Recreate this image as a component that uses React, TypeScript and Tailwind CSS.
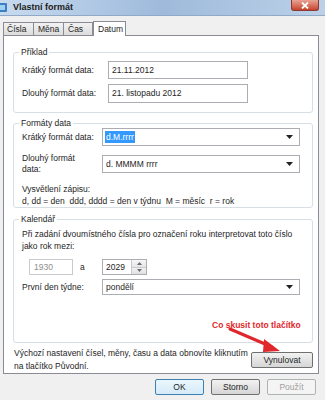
import { ChevronDown } from 'lucide-react';

const font = { fontFamily: '"Liberation Sans", Arial, sans-serif' };

function Combo({ value, selected, h = 'h-[18px]' }: { value: string; selected?: boolean; h?: string }) {
  return (
    <div className={`flex w-[198px] ${h} items-center justify-between border border-[#abadb3] bg-white pl-[2px] pr-[6px]`}>
      {selected ? (
        <span className="bg-[#3399ff] px-[1px] leading-[12px] text-white">{value}</span>
      ) : (
        <span className="px-[1px]">{value}</span>
      )}
      <svg width="7" height="4" viewBox="0 0 7 4">
        <path d="M0 0h7L3.5 4z" fill="#222" />
      </svg>
    </div>
  );
}

function Group({ label, className, children }: { label: string; className?: string; children: React.ReactNode }) {
  return (
    <div className={`rounded-[3px] border border-[#d5dfe5] ${className ?? ''}`}>
      <div className="ml-[5px] -mt-[7px] w-fit bg-white px-[2px] leading-[12px]">{label}</div>
      {children}
    </div>
  );
}

export default function App() {
  return (
    <div className="relative h-[400px] w-[325px] overflow-hidden bg-[#f0f0f0] text-[8.5px] text-[#1e1e1e]" style={font}>
      {/* Title bar */}
      <div className="flex h-[16px] items-start justify-between bg-gradient-to-r from-[#c8dbef] via-[#9ebadb] to-[#bcd1e8] border-b border-[#8fa9c6]">
        <div className="flex items-center gap-[4px] pt-[1px]">
          <svg width="9" height="11" viewBox="0 0 9 11">
            <rect x="-3" y="1" width="10" height="9" rx="1" fill="#3d7fc1" />
            <rect x="-1" y="3" width="6" height="5" fill="#9cd3f5" />
          </svg>
          <span className="text-[9px] font-bold leading-[12px] text-[#1b1b1b]">Vlastní formát</span>
        </div>
        <div className="mr-[6px] flex h-[11px] w-[28px] items-center justify-center rounded-b-[3px] border border-t-0 border-[#8a3a30] bg-gradient-to-b from-[#e8a294] to-[#c6422c]">
          <svg width="8" height="7" viewBox="0 0 8 7">
            <path d="M1 0.5l6 6M7 0.5l-6 6" stroke="white" strokeWidth="1.8" />
          </svg>
        </div>
      </div>

      {/* Tabs */}
      <div className="mt-[5px] flex items-end pl-[3px]">
        <div className="flex h-[13px] w-[31px] items-center border border-b-0 border-[#898c95] bg-gradient-to-b from-[#f2f2f2] to-[#dcdcdc] pl-[3px]">Čísla</div>
        <div className="flex h-[13px] w-[30px] items-center border border-b-0 border-l-0 border-[#898c95] bg-gradient-to-b from-[#f2f2f2] to-[#dcdcdc] pl-[4px]">Měna</div>
        <div className="flex h-[13px] w-[29px] items-center border border-b-0 border-l-0 border-[#898c95] bg-gradient-to-b from-[#f2f2f2] to-[#dcdcdc] pl-[4px]">Čas</div>
        <div className="relative -mb-px flex h-[15px] w-[33px] items-center border border-b-0 border-[#898c95] bg-white pl-[4px] z-10">Datum</div>
      </div>

      {/* Panel */}
      <div className="ml-[3px] flex h-[339px] w-[316px] flex-col border border-[#898c95] bg-white pl-[9px] pr-[5px] pt-[16px]">
        <Group label="Příklad" className="h-[62px]">
          <div className="mt-[3px] flex flex-col gap-[5px] pl-[8px]">
            <div className="flex items-center">
              <span className="w-[86px]">Krátký formát data:</span>
              <div className="flex h-[18px] w-[140px] items-center border border-[#abadb3] pl-[3px]">21.11.2012</div>
            </div>
            <div className="flex items-center">
              <span className="w-[86px]">Dlouhý formát data:</span>
              <div className="flex h-[19px] w-[140px] items-center border border-[#abadb3] pl-[3px]">21. listopadu 2012</div>
            </div>
          </div>
        </Group>

        <Group label="Formáty data" className="mt-[10px] h-[85px]">
          <div className="-mt-[1px] flex flex-col pl-[8px]">
            <div className="flex items-center">
              <span className="w-[80px]">Krátký formát data:</span>
              <Combo value="d.M.rrrr" selected />
            </div>
            <div className="mt-[7px] flex items-center">
              <span className="w-[80px] leading-[11px]">Dlouhý formát<br />data:</span>
              <Combo value="d. MMMM rrrr" />
            </div>
            <div className="mt-[8px] leading-[12px]">Vysvětlení zápisu:</div>
            <div className="leading-[12px] whitespace-pre">d, dd = den  ddd, dddd = den v týdnu  M = měsíc  r = rok</div>
          </div>
        </Group>

        <Group label="Kalendář" className="mt-[11px] h-[126px]">
          <div className="mt-[3px] flex flex-col pl-[8px]">
            <div className="leading-[12px]">Při zadání dvoumístného čísla pro označení roku interpretovat toto číslo<br />jako rok mezi:</div>
            <div className="mt-[7px] flex items-center">
              <div className="ml-[7px] flex h-[16px] w-[44px] items-center border border-[#c7cacf] pl-[4px] text-[#8d8d8d]">1930</div>
              <span className="ml-[7px] w-[22px]">a</span>
              <div className="flex h-[16px] w-[45px] items-center border border-[#abadb3]">
                <span className="flex-1 pl-[3px]">2029</span>
                <div className="flex h-full w-[15px] flex-col border-l border-[#c7cacf]">
                  <div className="flex flex-1 items-center justify-center border-b border-[#c7cacf] bg-gradient-to-b from-[#f7f7f7] to-[#e5e5e5]">
                    <svg width="5" height="3" viewBox="0 0 5 3"><path d="M0 3h5L2.5 0z" fill="#6d6d6d" /></svg>
                  </div>
                  <div className="flex flex-1 items-center justify-center bg-gradient-to-b from-[#f2f2f2] to-[#e0e0e0]">
                    <svg width="5" height="3" viewBox="0 0 5 3"><path d="M0 0h5L2.5 3z" fill="#6d6d6d" /></svg>
                  </div>
                </div>
              </div>
            </div>
            <div className="mt-[4px] flex items-center">
              <span className="w-[80px]">První den týdne:</span>
              <Combo value="pondělí" h="h-[16px]" />
            </div>
            <div className="mt-[24px] pl-[190px] text-[8.5px] font-bold leading-[12px] text-[#e0282c]">Co skusit toto tlačítko</div>
          </div>
        </Group>

        <div className="mt-[4px] flex items-start justify-between pl-[1px]">
          <div className="leading-[13px]">
            Výchozí nastavení čísel, měny, času a data obnovíte kliknutím<br />na tlačítko Původní.
          </div>
          <div className="mt-[5px] flex h-[16px] w-[62px] items-center justify-center rounded-[2px] border border-[#707070] bg-gradient-to-b from-[#f2f2f2] to-[#d6d6d6]">Vynulovat</div>
        </div>
      </div>

      {/* Bottom buttons */}
      <div className="mt-[5px] flex justify-end gap-[7px] pr-[9px]">
        <div className="flex h-[16px] w-[49px] items-center justify-center rounded-[2px] border border-[#3c7fb1] bg-gradient-to-b from-[#eaf6fd] to-[#d4ebf8]">OK</div>
        <div className="flex h-[16px] w-[49px] items-center justify-center rounded-[2px] border border-[#707070] bg-gradient-to-b from-[#f2f2f2] to-[#d6d6d6]">Storno</div>
        <div className="flex h-[16px] w-[49px] items-center justify-center rounded-[2px] border border-[#adb2b5] bg-[#f4f4f4] text-[#a0a0a0]">Použít</div>
      </div>

      {/* Red annotation arrow */}
      <svg className="absolute left-[224px] top-[326px]" width="62" height="30" viewBox="0 0 62 30">
        <path d="M6 3L48 21" stroke="#e0282c" strokeWidth="3" strokeLinecap="round" />
        <path d="M40 13L56 25L39 26z" fill="#e0282c" />
      </svg>
    </div>
  );
}
